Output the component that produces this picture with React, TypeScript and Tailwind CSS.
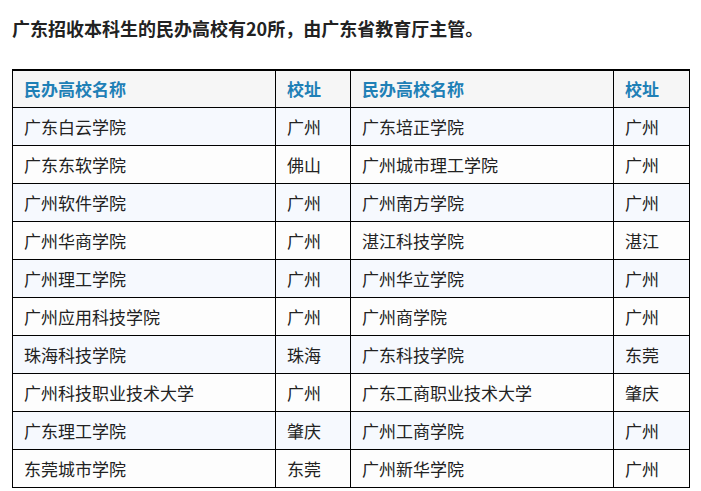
const rows: [string, string, string, string][] = [
  ["广东白云学院", "广州", "广东培正学院", "广州"],
  ["广东东软学院", "佛山", "广州城市理工学院", "广州"],
  ["广州软件学院", "广州", "广州南方学院", "广州"],
  ["广州华商学院", "广州", "湛江科技学院", "湛江"],
  ["广州理工学院", "广州", "广州华立学院", "广州"],
  ["广州应用科技学院", "广州", "广州商学院", "广州"],
  ["珠海科技学院", "珠海", "广东科技学院", "东莞"],
  ["广州科技职业技术大学", "广州", "广东工商职业技术大学", "肇庆"],
  ["广东理工学院", "肇庆", "广州工商学院", "广州"],
  ["东莞城市学院", "东莞", "广州新华学院", "广州"],
];

const headers = ["民办高校名称", "校址", "民办高校名称", "校址"];

export default function App() {
  return (
    <div
      className="w-[701px] h-[491px] bg-white overflow-hidden px-3"
      style={{ fontFamily: '"Noto Sans CJK SC", "Noto Sans", sans-serif' }}
    >
      <p className="pt-[17px] text-[18px] leading-[22px] font-bold text-[#222]">
        广东招收本科生的民办高校有20所，由广东省教育厅主管。
      </p>

      <table className="mt-[30px] w-[677px] border-collapse border-t-2 border-black text-[17px] text-[#222] table-fixed">
        <colgroup>
          <col className="w-[263px]" />
          <col className="w-[75px]" />
          <col className="w-[263px]" />
          <col className="w-[76px]" />
        </colgroup>
        <thead>
          <tr className="h-[37px] bg-[#f6f6f6]">
            {headers.map((h, i) => (
              <th
                key={i}
                className="border border-black px-[11px] text-left font-bold text-[#1f80b6] leading-none"
              >
                {h}
              </th>
            ))}
          </tr>
        </thead>
        <tbody>
          {rows.map((r, i) => (
            <tr key={i} className={`h-[38px] ${i % 2 === 0 ? "bg-[#f6f9fe]" : "bg-[#fdfdfd]"}`}>
              {r.map((c, j) => (
                <td key={j} className="border border-black px-[11px] leading-none">
                  {c}
                </td>
              ))}
            </tr>
          ))}
        </tbody>
      </table>
    </div>
  );
}
